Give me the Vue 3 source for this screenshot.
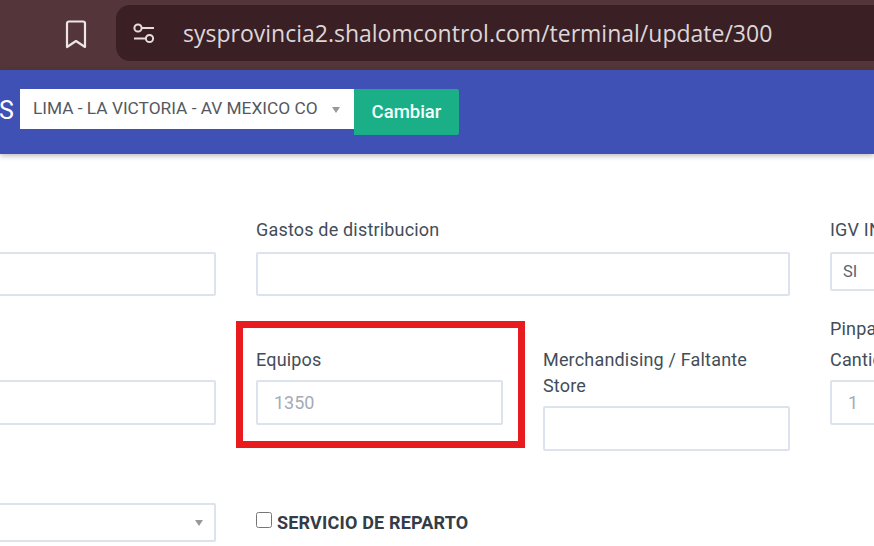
<template>
  <div class="page">
    <header class="browser-bar">
      <svg class="bookmark" width="24" height="31" viewBox="0 0 24 31" fill="none">
        <path d="M5 2.500h14a2 2 0 0 1 2 2v23.500l-9-6-9 6v-23.500a2 2 0 0 1 2-2z" stroke="#eee6e6" stroke-width="2.200" stroke-linejoin="round" />
      </svg>
      <div class="url-pill">
        <svg class="tune" width="24" height="23" viewBox="0 0 24 23" fill="none" stroke="#e6dcdc" stroke-width="2">
          <circle cx="6" cy="6" r="3.600" />
          <path d="M10 6h12" />
          <circle cx="17.500" cy="16.500" r="3.600" />
          <path d="M2 16.500h11.500" />
        </svg>
        <span class="url">sysprovincia2.shalomcontrol.com/terminal/update/300</span>
      </div>
    </header>

    <nav class="nav">
      <span class="nav-text">S</span>
      <div class="select-wrap nav-select">
        <select v-model="terminal">
          <option>LIMA - LA VICTORIA - AV MEXICO CO</option>
        </select>
      </div>
      <button type="button" class="btn-change">Cambiar</button>
    </nav>

    <form class="form" @submit.prevent>
      <div class="col col-left">
        <input class="control" />
        <input class="control tall" />
        <div class="select-wrap left-select">
          <select class="control"><option></option></select>
        </div>
      </div>

      <div class="col col-mid">
        <label class="field-label">Gastos de distribucion</label>
        <input class="control" />
        <div class="pair">
          <div class="field equipos">
            <label class="field-label">Equipos</label>
            <input class="control tall muted" v-model="equipos" />
            <div class="highlight"></div>
          </div>
          <div class="field">
            <label class="field-label">Merchandising / Faltante Store</label>
            <input class="control tall" />
          </div>
        </div>
        <label class="check">
          <input type="checkbox" />
          <span>SERVICIO DE REPARTO</span>
        </label>
      </div>

      <div class="col col-right">
        <label class="field-label">IGV INCLUIDO</label>
        <select class="control short" v-model="igv"><option>SI</option></select>
        <label class="field-label pinpad">Pinpad</label>
        <label class="field-label">Cantidad</label>
        <input class="control tall muted" v-model="cantidad" />
      </div>
    </form>
  </div>
</template>

<script setup>
import { ref } from 'vue';

const terminal = ref('LIMA - LA VICTORIA - AV MEXICO CO');
const equipos = ref('1350');
const igv = ref('SI');
const cantidad = ref('1');
</script>

<style scoped>
.page {
  width: 874px;
  height: 546px;
  overflow: hidden;
  background: #fff;
  font-family: Roboto, "Liberation Sans", sans-serif;
  color: #3f4a56;
}
.browser-bar {
  height: 70px;
  box-sizing: border-box;
  padding: 5px 0 9px 64px;
  display: flex;
  align-items: stretch;
  gap: 28px;
  background: #54363a;
}
.bookmark {
  align-self: center;
  margin-top: 3px;
}
.url-pill {
  flex: 1;
  display: flex;
  align-items: center;
  gap: 27px;
  padding-left: 16px;
  background: #3a2024;
  border-radius: 14px 0 0 14px;
}
.url {
  font-family: "Open Sans", sans-serif;
  font-size: 23px;
  color: #ddd6d8;
  white-space: nowrap;
}
.nav {
  height: 84px;
  box-sizing: border-box;
  padding-top: 19px;
  display: flex;
  align-items: flex-start;
  background: #3f51b5;
  box-shadow: 0 2px 5px rgba(0, 0, 0, 0.25);
  position: relative;
}
.nav-text {
  width: 20px;
  margin-top: 7px;
  font-size: 25px;
  color: #fff;
  text-indent: -1px;
}
.select-wrap {
  position: relative;
}
.select-wrap::after {
  content: "";
  position: absolute;
  top: 50%;
  margin-top: -3px;
  border: 4px solid transparent;
  border-top: 6px solid #999;
  border-bottom: 0;
}
select,
input {
  font-family: inherit;
  outline: none;
}
select {
  appearance: none;
}
.nav-select select {
  display: block;
  width: 334px;
  height: 40px;
  padding: 0 36px 2px 13px;
  border: 0;
  border-radius: 0;
  background: #fff;
  font-size: 17.300px;
  color: #55595f;
}
.nav-select::after {
  right: 14px;
  margin-top: -2px;
}
.btn-change {
  width: 105px;
  height: 46px;
  border: 0;
  border-radius: 0 2px 2px 0;
  background: #1aaf87;
  color: #f2fffa;
  font-family: inherit;
  font-size: 18.500px;
  font-weight: 500;
}
.form {
  display: flex;
  gap: 40px;
  padding-top: 62px;
  white-space: nowrap;
}
.col {
  flex-shrink: 0;
  display: flex;
  flex-direction: column;
}
.col-left {
  width: 216px;
  padding-top: 36px;
}
.col-mid {
  width: 534px;
}
.col-right {
  width: 240px;
}
.field-label {
  display: block;
  min-height: 26px;
  padding-top: 1px;
  margin-bottom: 9px;
  font-size: 18px;
  letter-spacing: 0.18px;
  line-height: 26px;
  color: #434d59;
}
.control {
  display: block;
  width: 100%;
  height: 44px;
  box-sizing: border-box;
  padding: 0 16px;
  border: 2px solid #dde3ec;
  border-radius: 2px;
  background: #fff;
  font-size: 18px;
  color: #5c6470;
}
.tall {
  height: 45px;
}
.short {
  height: 39px;
  padding: 0 11px;
  font-size: 16.500px;
}
.muted {
  color: #a5abb6;
}
.col-left > .control,
.left-select {
  margin-left: -10px;
  width: calc(100% + 10px);
}
.col-left > .control.tall {
  margin-top: 84px;
}
.left-select {
  margin-top: 78px;
}
.left-select .control {
  height: 39px;
}
.left-select::after {
  right: 13px;
}
.pair {
  display: grid;
  grid-template-columns: 247px 247px;
  gap: 40px;
  margin-top: 50px;
  align-items: start;
  white-space: normal;
}
.pair .field-label {
  margin-bottom: 7px;
}
.equipos {
  position: relative;
}
/* red annotation drawn over the screenshot */
.highlight {
  position: absolute;
  left: -20.500px;
  top: -25px;
  width: 289px;
  height: 127px;
  box-sizing: border-box;
  border: 7px solid #e81c1f;
}
.check {
  display: flex;
  align-items: center;
  gap: 5px;
  margin-top: 61px;
  font-size: 18px;
  letter-spacing: 0.18px;
  font-weight: 700;
  color: #333c47;
}
.check input {
  width: 16px;
  height: 16px;
  margin: 0;
  position: relative;
  top: -3px;
}
.pinpad {
  margin-top: 24px;
  margin-bottom: 4px;
}
.col-right .field-label:last-of-type {
  margin-bottom: 7px;
}
</style>

<style>
html,
body {
  margin: 0;
  overflow: hidden;
}
</style>
